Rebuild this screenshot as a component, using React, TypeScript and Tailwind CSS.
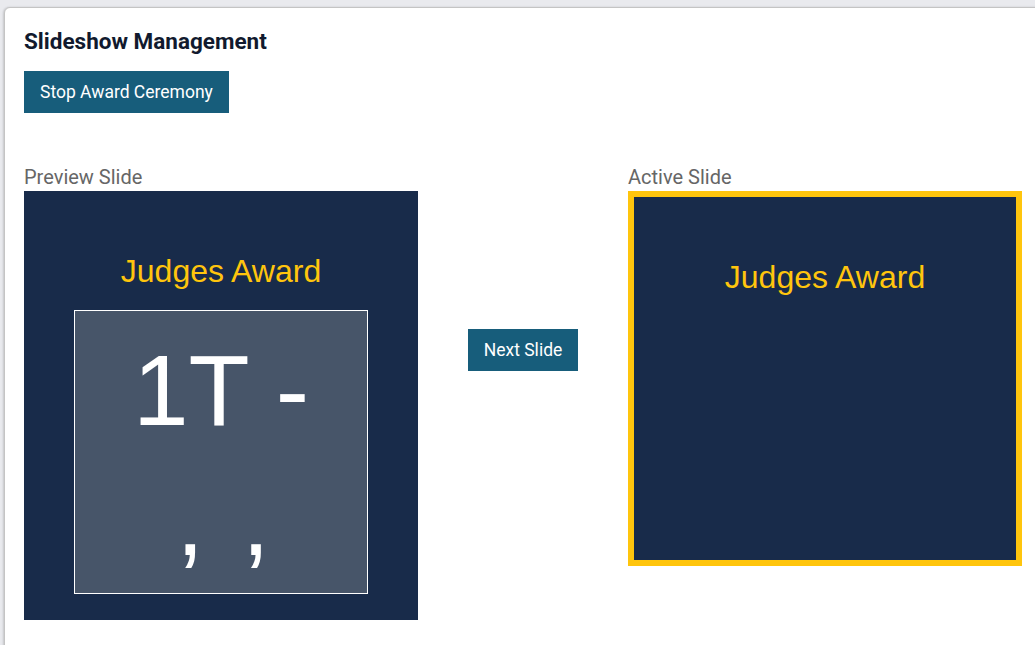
import React from 'react';

const slideBg = 'bg-[#182b4a]';

export default function App() {
  return (
    <div className="w-[1035px] h-[645px] overflow-hidden bg-[#e9eaee] pt-[7px] pl-[4px] font-[family-name:Roboto,sans-serif]">
      <div className="w-[1080px] h-[700px] bg-white border border-[#c4c4c4] rounded-tl-[6px] shadow-[-1px_0_2px_rgba(0,0,0,0.15)] pt-5 pl-[19px]">
        <h2 className="text-[22.5px] leading-[27px] font-bold text-[#111a2e]">
          Slideshow Management
        </h2>
        <button className="mt-4 h-[42px] px-4 bg-[#175d7b] text-white text-[17.5px]">
          Stop Award Ceremony
        </button>

        <div className="mt-[52px] flex items-start gap-[50px]">
          <div className="flex flex-col">
            <span className="text-[20px] leading-[24px] text-[#666666]">Preview Slide</span>
            <div className={`mt-[2px] w-[394px] h-[429px] ${slideBg} pt-[62px] flex flex-col items-center font-[family-name:'Liberation_Sans',Arial,sans-serif]`}>
              <div className="text-[32px] leading-[37px] text-[#ffc50d]">Judges Award</div>
              <div className="mt-5 w-[294px] h-[284px] bg-[#475569] border border-white pt-[14px] text-center text-white text-[100px] leading-[130px]">
                <div>1T -</div>
                <div className="pl-[4px]">
                  ,<span className="ml-[38px]">,</span>
                </div>
              </div>
            </div>
          </div>

          <button className="mt-[164px] h-[42px] w-[110px] bg-[#175d7b] text-white text-[17.5px]">
            Next Slide
          </button>

          <div className="flex flex-col">
            <span className="text-[20px] leading-[24px] text-[#666666]">Active Slide</span>
            <div className={`mt-[2px] w-[394px] h-[375px] border-[6px] border-[#ffc50d] ${slideBg} pt-[62px] flex flex-col items-center font-[family-name:'Liberation_Sans',Arial,sans-serif]`}>
              <div className="text-[32px] leading-[37px] text-[#ffc50d]">Judges Award</div>
            </div>
          </div>
        </div>
      </div>
    </div>
  );
}
